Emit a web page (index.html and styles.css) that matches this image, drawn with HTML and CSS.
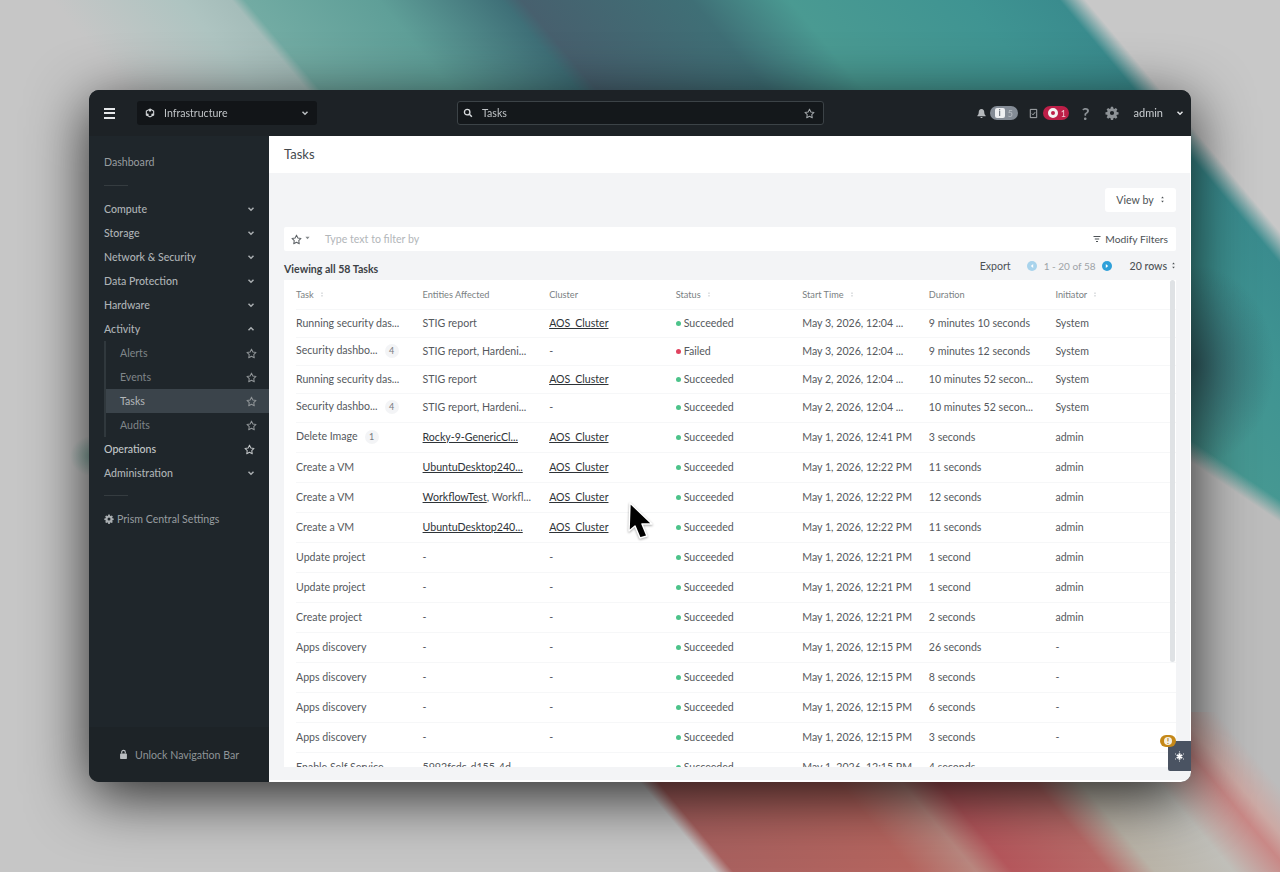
FILE: index.html
```html
<!DOCTYPE html>
<html lang="en">
<head>
  <meta charset="UTF-8">
  <meta name="viewport" content="width=device-width, initial-scale=1.0">
  <title>Tasks</title>
  <link rel="stylesheet" href="styles.css">
</head>
<body>

  <svg class="defs" width="0" height="0" aria-hidden="true">
    <symbol id="chev-down" viewBox="0 0 8 8"><path d="M1.5 2.8 4 5.2l2.5-2.4" fill="none" stroke="currentColor" stroke-width="1.5"/></symbol>
    <symbol id="chev-up" viewBox="0 0 8 8"><path d="M1.5 5.2 4 2.8l2.5 2.4" fill="none" stroke="currentColor" stroke-width="1.5"/></symbol>
    <symbol id="star" viewBox="0 0 12 12"><path d="M6 1.2l1.5 3.1 3.4.5-2.45 2.4.58 3.4L6 9l-3.03 1.6.58-3.4L1.1 4.8l3.4-.5z" fill="none" stroke="currentColor" stroke-width="1.1" stroke-linejoin="round"/></symbol>
    <symbol id="sort" viewBox="0 0 6 10"><path d="M3 1.5 4.6 3.6H1.4zM3 8.5 1.4 6.4h3.2z" fill="currentColor"/></symbol>
    <symbol id="gear" viewBox="0 0 14 14"><path fill-rule="evenodd" fill="currentColor" d="M5.9.8h2.2l.3 1.7 1 .45 1.45-1 1.55 1.55-1 1.45.45 1 1.7.3v2.2l-1.7.3-.45 1 1 1.45-1.55 1.55-1.45-1-1 .45-.3 1.7H5.9l-.3-1.7-1-.45-1.45 1L1.6 11.2l1-1.45-.45-1-1.7-.3V6.25l1.7-.3.45-1-1-1.45L3.15 1.95l1.45 1 1-.45zM7 4.9a2.1 2.1 0 1 0 0 4.2 2.1 2.1 0 0 0 0-4.2z"/></symbol>
  </svg>

  <main class="window">
    <header class="topbar">
      <button class="burger" aria-label="Menu"><span></span><span></span><span></span></button>
      <div class="app-select">
        <svg class="app-icon" viewBox="0 0 12 12"><path d="M6 1.2 10.4 3.7v4.6L6 10.8 1.6 8.3V3.7z" fill="none" stroke="currentColor" stroke-width="1.3"/><circle cx="6" cy="3" r="1.4" fill="currentColor"/><circle cx="3" cy="8" r="1.4" fill="currentColor"/><circle cx="9" cy="8" r="1.4" fill="currentColor"/></svg>
        <span class="app-name">Infrastructure</span>
        <svg class="chev"><use href="#chev-down"/></svg>
      </div>
      <div class="search">
        <svg class="search-icon" viewBox="0 0 12 12"><circle cx="5" cy="5" r="3.3" fill="none" stroke="currentColor" stroke-width="1.6"/><path d="M7.6 7.6 10.6 10.6" stroke="currentColor" stroke-width="1.8"/></svg>
        <span class="search-text">Tasks</span>
        <svg class="search-star"><use href="#star"/></svg>
      </div>
      <div class="top-right">
        <svg class="bell" viewBox="0 0 12 12"><path d="M6 1c2 0 3 1.500 3 3.400 0 2 .6 3 1.500 3.800v.8h-9v-.8C2.400 7.400 3 6.400 3 4.400 3 2.500 4 1 6 1zM4.800 9.800h2.400c0 .8-.5 1.200-1.200 1.200s-1.200-.4-1.200-1.200z" fill="currentColor"/></svg>
        <div class="pill pill-info"><span class="pill-i">i</span><span>5</span></div>
        <svg class="tasks-icon" viewBox="0 0 12 12"><path d="M2.500 1.500h7v9h-7z" fill="none" stroke="currentColor" stroke-width="1"/><path d="M4.300 6.200 5.500 7.400 7.800 4.600" fill="none" stroke="currentColor" stroke-width="1"/></svg>
        <div class="pill pill-alert"><span class="pill-ring"></span><span>1</span></div>
        <span class="help">?</span>
        <svg class="top-gear"><use href="#gear"/></svg>
        <span class="user">admin</span>
        <svg class="chev user-chev"><use href="#chev-down"/></svg>
      </div>
    </header>

    <div class="body">
      <nav class="sidebar">
        <div class="nav-scroll">
          <a class="nav-item nav-plain">Dashboard</a>
          <hr class="nav-rule">
          <a class="nav-item">Compute<svg class="chev"><use href="#chev-down"/></svg></a>
          <a class="nav-item">Storage<svg class="chev"><use href="#chev-down"/></svg></a>
          <a class="nav-item">Network &amp; Security<svg class="chev"><use href="#chev-down"/></svg></a>
          <a class="nav-item">Data Protection<svg class="chev"><use href="#chev-down"/></svg></a>
          <a class="nav-item">Hardware<svg class="chev"><use href="#chev-down"/></svg></a>
          <a class="nav-item">Activity<svg class="chev"><use href="#chev-up"/></svg></a>
          <div class="nav-sub">
            <a class="nav-item sub-item">Alerts<svg class="star"><use href="#star"/></svg></a>
            <a class="nav-item sub-item">Events<svg class="star"><use href="#star"/></svg></a>
            <a class="nav-item sub-item active">Tasks<svg class="star"><use href="#star"/></svg></a>
            <a class="nav-item sub-item">Audits<svg class="star"><use href="#star"/></svg></a>
          </div>
          <a class="nav-item nav-strong">Operations<svg class="star"><use href="#star"/></svg></a>
          <a class="nav-item">Administration<svg class="chev"><use href="#chev-down"/></svg></a>
          <hr class="nav-rule nav-rule-low">
          <a class="nav-item nav-plain settings"><svg class="small-gear"><use href="#gear"/></svg>Prism Central Settings</a>
        </div>
        <div class="nav-foot">
          <svg class="lock" viewBox="0 0 10 12"><path d="M3 5V3.500a2 2 0 0 1 4 0V5" fill="none" stroke="currentColor" stroke-width="1.300"/><rect x="1.200" y="5" width="7.600" height="6" rx=".8" fill="currentColor"/></svg>
          Unlock Navigation Bar
        </div>
      </nav>

      <section class="content">
        <div class="page-head">Tasks</div>
        <div class="page-body">
          <div class="view-row"><button class="view-by">View by<svg class="view-sort"><use href="#sort"/></svg></button></div>

          <div class="filter-bar">
            <svg class="filter-star"><use href="#star"/></svg>
            <svg class="filter-caret" viewBox="0 0 6 4"><path d="M.5.5h5L3 3.500z" fill="currentColor"/></svg>
            <span class="filter-hint">Type text to filter by</span>
            <span class="modify">
              <svg class="funnel" viewBox="0 0 8 8"><path d="M.5 1.500h7M1.800 4h4.400M3 6.500h2" stroke="currentColor" stroke-width="1.200"/></svg>
              Modify Filters
            </span>
          </div>

          <div class="list-head">
            <strong class="viewing">Viewing all 58 Tasks</strong>
            <div class="pager">
              <span class="export">Export</span>
              <span class="page-dot dot-off"><svg viewBox="0 0 10 10"><path d="M6.200 3 3.800 5l2.400 2z" fill="#fff"/></svg></span>
              <span class="range">1 - 20 of 58</span>
              <span class="page-dot"><svg viewBox="0 0 10 10"><path d="M3.800 3 6.200 5 3.800 7z" fill="#fff"/></svg></span>
              <span class="rows">20 rows<svg class="view-sort"><use href="#sort"/></svg></span>
            </div>
          </div>

          <div class="table-card">
            <span class="scroll-thumb"></span>
            <table class="tasks">
              <thead>
                <tr>
                  <th>Task<svg class="sort"><use href="#sort"/></svg></th>
                  <th>Entities Affected</th>
                  <th>Cluster</th>
                  <th>Status<svg class="sort"><use href="#sort"/></svg></th>
                  <th>Start Time<svg class="sort"><use href="#sort"/></svg></th>
                  <th>Duration</th>
                  <th>Initiator<svg class="sort"><use href="#sort"/></svg></th>
                </tr>
              </thead>
              <tbody>
                <tr class="tight"><td>Running security das...</td><td>STIG report</td><td><a>AOS_Cluster</a></td><td><i class="dot ok"></i>Succeeded</td><td>May 3, 2026, 12:04 ...</td><td>9 minutes 10 seconds</td><td>System</td></tr>
                <tr class="tight"><td>Security dashbo...<span class="count">4</span></td><td>STIG report, Hardeni...</td><td>-</td><td><i class="dot bad"></i>Failed</td><td>May 3, 2026, 12:04 ...</td><td>9 minutes 12 seconds</td><td>System</td></tr>
                <tr class="tight"><td>Running security das...</td><td>STIG report</td><td><a>AOS_Cluster</a></td><td><i class="dot ok"></i>Succeeded</td><td>May 2, 2026, 12:04 ...</td><td>10 minutes 52 secon...</td><td>System</td></tr>
                <tr class="tight"><td>Security dashbo...<span class="count">4</span></td><td>STIG report, Hardeni...</td><td>-</td><td><i class="dot ok"></i>Succeeded</td><td>May 2, 2026, 12:04 ...</td><td>10 minutes 52 secon...</td><td>System</td></tr>
                <tr><td>Delete Image<span class="count">1</span></td><td><a>Rocky-9-GenericCl...</a></td><td><a>AOS_Cluster</a></td><td><i class="dot ok"></i>Succeeded</td><td>May 1, 2026, 12:41 PM</td><td>3 seconds</td><td>admin</td></tr>
                <tr><td>Create a VM</td><td><a>UbuntuDesktop240...</a></td><td><a>AOS_Cluster</a></td><td><i class="dot ok"></i>Succeeded</td><td>May 1, 2026, 12:22 PM</td><td>11 seconds</td><td>admin</td></tr>
                <tr><td>Create a VM</td><td><a>WorkflowTest</a>, Workfl...</td><td><a>AOS_Cluster</a></td><td><i class="dot ok"></i>Succeeded</td><td>May 1, 2026, 12:22 PM</td><td>12 seconds</td><td>admin</td></tr>
                <tr><td>Create a VM</td><td><a>UbuntuDesktop240...</a></td><td><a>AOS_Cluster</a></td><td><i class="dot ok"></i>Succeeded</td><td>May 1, 2026, 12:22 PM</td><td>11 seconds</td><td>admin</td></tr>
                <tr><td>Update project</td><td>-</td><td>-</td><td><i class="dot ok"></i>Succeeded</td><td>May 1, 2026, 12:21 PM</td><td>1 second</td><td>admin</td></tr>
                <tr><td>Update project</td><td>-</td><td>-</td><td><i class="dot ok"></i>Succeeded</td><td>May 1, 2026, 12:21 PM</td><td>1 second</td><td>admin</td></tr>
                <tr><td>Create project</td><td>-</td><td>-</td><td><i class="dot ok"></i>Succeeded</td><td>May 1, 2026, 12:21 PM</td><td>2 seconds</td><td>admin</td></tr>
                <tr><td>Apps discovery</td><td>-</td><td>-</td><td><i class="dot ok"></i>Succeeded</td><td>May 1, 2026, 12:15 PM</td><td>26 seconds</td><td>-</td></tr>
                <tr><td>Apps discovery</td><td>-</td><td>-</td><td><i class="dot ok"></i>Succeeded</td><td>May 1, 2026, 12:15 PM</td><td>8 seconds</td><td>-</td></tr>
                <tr><td>Apps discovery</td><td>-</td><td>-</td><td><i class="dot ok"></i>Succeeded</td><td>May 1, 2026, 12:15 PM</td><td>6 seconds</td><td>-</td></tr>
                <tr><td>Apps discovery</td><td>-</td><td>-</td><td><i class="dot ok"></i>Succeeded</td><td>May 1, 2026, 12:15 PM</td><td>3 seconds</td><td>-</td></tr>
                <tr><td>Enable Self Service</td><td>5992fcdc-d155-4d...</td><td>-</td><td><i class="dot ok"></i>Succeeded</td><td>May 1, 2026, 12:15 PM</td><td>4 seconds</td><td>-</td></tr>
              </tbody>
            </table>
          </div>
        </div>

        <button class="assist" aria-label="Assistant">
          <svg viewBox="0 0 12 12"><path d="M6 2.500v7M3 4.300l6 3.400M9 4.300l-6 3.400" stroke="currentColor" stroke-width="2"/><path d="M6 .5v1M1.200 3l1 .6M10.800 3l-1 .6M1.200 9l1-.6M10.800 9l-1-.6M6 10.500v1" stroke="currentColor" stroke-width="1"/></svg>
        </button>
        <span class="assist-badge"><span class="assist-mark">!</span></span>
      </section>
    </div>
  </main>

  <svg class="cursor" viewBox="0 0 30 44"><path d="M4 3 3 31l6-5 5 12 7-2-5-12h10z" fill="#000" stroke="#fff" stroke-width="1.500" stroke-linejoin="round"/></svg>

</body>
</html>
```

FILE: styles.css
```css
* {
  box-sizing: border-box;
}
html, body {
  margin: 0;
  height: 100%;
}
body {
  display: flex;
  align-items: center;
  justify-content: center;
  position: relative;
  overflow: hidden;
  font-family: Lato, "Liberation Sans", sans-serif;
  font-size: 10.6px;
  /* blurred wallpaper: bands share one slant, window hides most of it */
  background:
    radial-gradient(22px 20px at 92px 456px, #86aba3, rgba(134, 171, 163, 0)),
    linear-gradient(50deg, rgba(190, 190, 190, 0) 548px, #a9615f 562px, #b5655f 700px, #b9877f 748px, #b5575c 776px, #b96a68 850px, #bab4a8 885px, #c0bfb9 945px, #c98886 988px, #cca9a4 1005px, rgba(194, 192, 184, 0) 1035px) left bottom / 100% 160px no-repeat,
    radial-gradient(80px 100px at 1195px 365px, rgba(40, 52, 66, .5), rgba(40, 52, 66, 0)),
    linear-gradient(214deg, rgba(190, 190, 190, 0) 50px, #bcbcbc 68px) right 0 top 440px / 89px 432px no-repeat,
    linear-gradient(50deg, #c6c6c6 600px, #aec4c1 700px, #a5bdba 738px, #72aba3 748px, #5f9f98 850px, #3f7078 945px, #47606e 960px, #3f6f76 1090px, #4a9a92 1165px, #3f9492 1300px, #3a8c8e 1372px, #c8c8c8 1392px);
}
.defs {
  position: absolute;
}

/* window */
.window {
  width: 1102px;
  height: 692px;
  display: flex;
  flex-direction: column;
  border-radius: 10px;
  overflow: hidden;
  box-shadow: 0 14px 60px rgba(0, 0, 0, .8);
  background: #1f262a;
  filter: blur(.35px);
}

/* top bar */
.topbar {
  height: 46px;
  flex: none;
  display: flex;
  align-items: center;
  padding-left: 15px;
  background: #1d2226;
  color: #c9cdd0;
}
.burger {
  width: 11px;
  height: 11px;
  padding: 0;
  border: 0;
  background: none;
  display: flex;
  flex-direction: column;
  justify-content: space-between;
  margin-right: 22px;
}
.burger span {
  height: 2px;
  background: #e6e8ea;
}
.app-select {
  width: 180px;
  height: 24px;
  display: flex;
  align-items: center;
  padding: 0 8px;
  background: #121518;
  border-radius: 3px;
}
.app-icon {
  width: 10px;
  height: 10px;
  margin-right: 9px;
  color: #d5d8da;
}
.app-name {
  flex: 1;
  padding-bottom: 1px;
  color: #c0c4c7;
}
.chev {
  width: 8px;
  height: 8px;
  color: #b9bdc0;
}
.search {
  width: 367px;
  height: 24px;
  margin-left: 140px;
  display: flex;
  align-items: center;
  padding: 0 8px 0 5px;
  background: #14181b;
  border: 1px solid #3c4347;
  border-radius: 3px;
}
.search-icon {
  width: 10px;
  height: 10px;
  color: #d8dbdd;
  margin-right: 9px;
}
.search-text {
  flex: 1;
  padding-bottom: 1px;
  color: #c0c4c7;
}
.search-star {
  width: 11px;
  height: 11px;
  color: #a4a9ac;
}
.top-right {
  margin-left: auto;
  display: flex;
  align-items: center;
  padding-right: 7px;
}
.bell {
  width: 11px;
  height: 11px;
  color: #b5b9bc;
}
.pill {
  height: 14px;
  border-radius: 7px;
  display: flex;
  align-items: center;
  font-size: 9px;
}
.pill-info {
  width: 28px;
  margin-left: 3px;
  padding-left: 5px;
  gap: 3px;
  background: #848c96;
  color: #b9bec4;
}
.pill-i {
  width: 10px;
  height: 10px;
  background: #eef0f2;
  color: #6f7882;
  border-radius: 2px;
  font-weight: 700;
  text-align: center;
  line-height: 10px;
}
.tasks-icon {
  width: 11px;
  height: 11px;
  margin-left: 10px;
  color: #b5b9bc;
}
.pill-alert {
  width: 26px;
  margin-left: 4px;
  padding-left: 5px;
  gap: 3px;
  background: #bd1f48;
  color: #f0c8d2;
}
.pill-ring {
  width: 10px;
  height: 10px;
  border: 3px solid #f3f3f3;
  border-radius: 50%;
}
.help {
  margin-left: 13px;
  font-size: 17px;
  font-weight: 700;
  color: #8d9296;
}
.top-gear {
  width: 14px;
  height: 14px;
  margin-left: 15px;
  color: #8d9296;
}
.user {
  margin-left: 15px;
  padding-bottom: 1px;
  font-size: 11px;
  color: #c9cdd0;
}
.user-chev {
  margin-left: 13px;
  color: #e0e2e4;
}

.body {
  flex: 1;
  display: flex;
  min-height: 0;
}

/* sidebar */
.sidebar {
  width: 180px;
  flex: none;
  display: flex;
  flex-direction: column;
  background: #1f262b;
  color: #aeb3b6;
}
.nav-scroll {
  flex: 1;
  padding-top: 14px;
}
.nav-item {
  height: 24px;
  display: flex;
  align-items: center;
  justify-content: space-between;
  padding: 0 14px 0 15px;
  font-weight: 500;
}
.nav-plain {
  font-weight: 400;
  color: #989da0;
}
.nav-strong {
  color: #c2c6c8;
}
.nav-item .chev {
  color: #a9aeb1;
}
.star {
  width: 11px;
  height: 11px;
  color: #8f9497;
}
.nav-strong .star {
  color: #c2c6c8;
}
.nav-rule {
  width: 24px;
  height: 1px;
  margin: 11px 0 11px 15px;
  border: 0;
  background: #353c40;
}
.nav-rule-low {
  margin: 10px 0 11px 15px;
}
.nav-sub {
  margin-left: 15px;
  border-left: 2px solid #30383d;
}
.sub-item {
  padding: 0 12px 0 14px;
  font-weight: 400;
  color: #7f8589;
}
.sub-item.active {
  background: #3b444b;
  color: #b3b7ba;
}
.settings {
  justify-content: flex-start;
  gap: 3px;
}
.small-gear {
  width: 10px;
  height: 10px;
  color: #a9aeb1;
}
.nav-foot {
  height: 55px;
  flex: none;
  display: flex;
  align-items: center;
  padding-left: 30px;
  gap: 7px;
  background: #1d2327;
  color: #8f9497;
}
.lock {
  width: 9px;
  height: 11px;
  color: #b9bdc0;
}

/* content */
.content {
  flex: 1;
  min-width: 0;
  display: flex;
  flex-direction: column;
  position: relative;
  background: #f3f4f6;
  border-bottom: 2px solid #fff;
  border-right: 1px solid #fff;
}
.page-head {
  height: 37px;
  flex: none;
  padding: 0 0 2px 15px;
  display: flex;
  align-items: center;
  background: #fff;
  font-size: 13px;
  color: #44494d;
}
.page-body {
  flex: 1;
  min-height: 0;
  padding: 15px 14px 0 15px;
  display: flex;
  flex-direction: column;
}
.view-row {
  display: flex;
  justify-content: flex-end;
}
.view-by {
  width: 71px;
  height: 24px;
  padding: 0 0 1px;
  display: flex;
  align-items: center;
  justify-content: center;
  gap: 6px;
  border: 0;
  border-radius: 3px;
  background: #fff;
  font: inherit;
  color: #4d5256;
}
.view-sort {
  width: 5px;
  height: 9px;
  color: #4d5256;
}
.filter-bar {
  height: 24px;
  margin-top: 15px;
  display: flex;
  align-items: center;
  padding: 0 8px 0 7px;
  background: #fff;
  border-radius: 2px;
}
.filter-star {
  width: 11px;
  height: 11px;
  color: #5d6266;
}
.filter-caret {
  width: 5px;
  height: 4px;
  margin: 0 0 2px 3px;
  color: #85898c;
}
.filter-hint {
  flex: 1;
  margin-left: 15px;
  padding-bottom: 1px;
  color: #b2b6b9;
}
.modify {
  display: flex;
  align-items: center;
  gap: 4px;
  padding-bottom: 1px;
  font-size: 10.300px;
  color: #4d5256;
}
.funnel {
  width: 8px;
  height: 8px;
}
.list-head {
  height: 29px;
  flex: none;
  display: flex;
  align-items: center;
  justify-content: space-between;
  color: #4d5256;
}
.viewing {
  font-weight: 700;
  padding-top: 6px;
  color: #3d4246;
}
.pager {
  display: flex;
  align-items: center;
}
.export {
  margin-right: 16px;
}
.page-dot {
  width: 10px;
  height: 10px;
  border-radius: 50%;
  background: #2fa0d9;
}
.page-dot svg {
  display: block;
  width: 10px;
  height: 10px;
}
.dot-off {
  background: #a8d3ec;
}
.range {
  margin: 0 7px;
  font-size: 10px;
  color: #9ea3a7;
}
.rows {
  margin-left: 17px;
  display: flex;
  align-items: center;
  gap: 4px;
  font-weight: 500;
}

/* table */
.table-card {
  flex: 1;
  min-height: 0;
  max-height: 487px;
  position: relative;
  overflow: hidden;
  background: #fff;
  padding-left: 12px;
}
.scroll-thumb {
  position: absolute;
  top: 0;
  right: 1px;
  width: 5px;
  height: 382px;
  background: #dfe2e5;
  border-radius: 3px;
}
.tasks {
  width: 886px;
  table-layout: fixed;
  border-collapse: collapse;
  color: #55595d;
}
.tasks th {
  height: 29px;
  padding: 1px 0 0;
  text-align: left;
  font-weight: 400;
  font-size: 9.200px;
  color: #7a7f83;
}
.tasks td {
  height: 30px;
  padding: 0;
  white-space: nowrap;
  border-top: 1px solid #f6f7f8;
}
.tasks tr.tight td {
  height: 28px;
}
.tasks tr.tight:nth-child(4) td {
  height: 29px;
  padding-bottom: 1px;
}
.tasks a {
  color: #2e3337;
  text-decoration: underline;
}
.sort {
  width: 4px;
  height: 7px;
  margin-left: 6px;
  color: #b9bdc0;
}
.count {
  display: inline-block;
  width: 14px;
  height: 14px;
  margin-left: 7px;
  border-radius: 7px;
  background: #f3f4f6;
  text-align: center;
  font-size: 9px;
  line-height: 14px;
  color: #777b7f;
}
.dot {
  display: inline-block;
  width: 5px;
  height: 5px;
  margin: 0 3px 1px 0;
  border-radius: 50%;
}
.ok {
  background: #4cc38a;
}
.bad {
  background: #e0435f;
}

/* floating helper in the corner */
.assist {
  position: absolute;
  right: -1px;
  bottom: 9px;
  width: 23px;
  height: 30px;
  padding: 0;
  border: 0;
  border-radius: 2px 0 0 2px;
  background: #4a5362;
  color: #fff;
  display: flex;
  align-items: center;
  justify-content: center;
}
.assist svg {
  width: 11px;
  height: 11px;
}
.assist-badge {
  position: absolute;
  right: 14px;
  bottom: 33px;
  width: 16px;
  height: 12px;
  border-radius: 6px;
  background: #c58818;
  display: flex;
  align-items: center;
  justify-content: center;
}
.assist-mark {
  width: 8px;
  height: 8px;
  border-radius: 50%;
  background: #f6efe0;
  color: #a06c10;
  font-size: 7px;
  font-weight: 700;
  line-height: 8px;
  text-align: center;
}

.cursor {
  position: absolute;
  left: 626px;
  top: 500px;
  width: 30px;
  height: 44px;
  filter: drop-shadow(0 1px 1px rgba(0, 0, 0, .35));
}
```
